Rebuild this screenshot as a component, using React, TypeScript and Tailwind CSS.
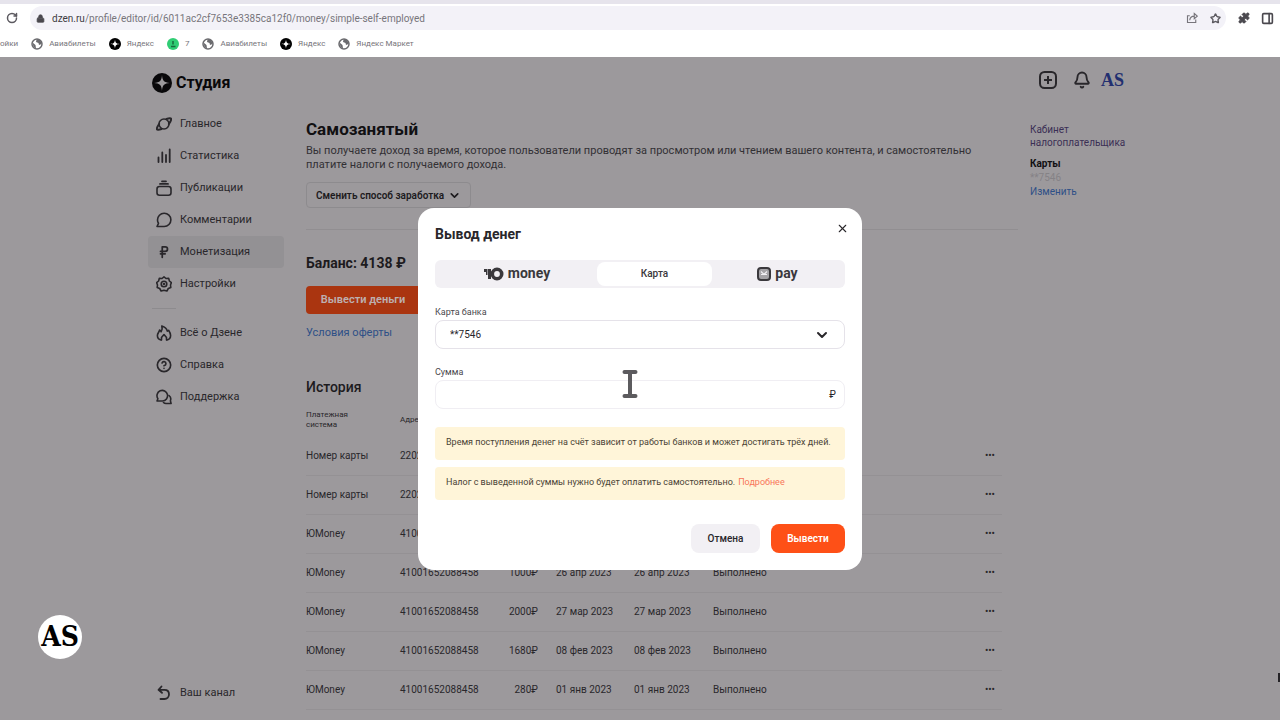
import type { ReactNode } from 'react'
import { Bell, ChevronDown, CircleHelp, Lock, PanelRight, Puzzle, RotateCw, RussianRuble, Star, X } from 'lucide-react'

const bookmarks = [
  { icon: 'globe', text: 'Авиабилеты' },
  { icon: 'zen', text: 'Яндекс' },
  { icon: 'green', text: '7' },
  { icon: 'globe', text: 'Авиабилеты' },
  { icon: 'zen', text: 'Яндекс' },
  { icon: 'globe', text: 'Яндекс Маркет' },
]

const rows = [
  { system: 'Номер карты', address: '2202', amount: '', asked: '', paid: '', status: '' },
  { system: 'Номер карты', address: '2202', amount: '', asked: '', paid: '', status: '' },
  { system: 'ЮMoney', address: '4100', amount: '', asked: '', paid: '', status: '' },
  { system: 'ЮMoney', address: '41001652088458', amount: '1000₽', asked: '26 апр 2023', paid: '26 апр 2023', status: 'Выполнено' },
  { system: 'ЮMoney', address: '41001652088458', amount: '2000₽', asked: '27 мар 2023', paid: '27 мар 2023', status: 'Выполнено' },
  { system: 'ЮMoney', address: '41001652088458', amount: '1680₽', asked: '08 фев 2023', paid: '08 фев 2023', status: 'Выполнено' },
  { system: 'ЮMoney', address: '41001652088458', amount: '280₽', asked: '01 янв 2023', paid: '01 янв 2023', status: 'Выполнено' },
]

const ZenMark = ({ className, star }: { className: string, star: string }) => (
  <svg viewBox="0 0 24 24" className={className} aria-hidden="true">
    <circle cx="12" cy="12" r="12" fill="currentColor" />
    <path d="M12 2.500c.4 6.600 2.400 9.100 9.500 9.500-7.100.4-9.100 2.900-9.500 9.500-.4-6.600-2.400-9.100-9.500-9.500 7.100-.4 9.100-2.900 9.500-9.500z" fill={star} />
  </svg>
)

const GlobeMark = () => (
  <svg viewBox="0 0 24 24" className="size-3 text-[#6a6a6e]" aria-hidden="true">
    <circle cx="12" cy="12" r="10" fill="none" stroke="currentColor" strokeWidth="3" />
    <path d="M3 9l6 5 1 7-5-3zM11 3l-1 5 5 2 1 4 5-2-2-7-5-3z" fill="currentColor" />
  </svg>
)

const GreenMark = () => (
  <svg viewBox="0 0 24 24" className="size-3" aria-hidden="true">
    <circle cx="12" cy="12" r="12" fill="#30cd74" />
    <path d="M12 6v7M8 17h9" stroke="#176b3c" strokeWidth="3" fill="none" />
  </svg>
)

const ShareIcon = () => (
  <svg viewBox="0 0 16 16" className="size-3" fill="none" stroke="currentColor" strokeWidth="1.500" aria-hidden="true">
    <path d="M5 5H2v9h11v-4" />
    <path d="M5 11c.3-3.500 2.500-5.500 6-5.500M11 2l4 3.500L11 9z" />
  </svg>
)

// 16px line icons of the side menu
const MenuIcon = ({ children }: { children: ReactNode }) => (
  <svg viewBox="0 0 16 16" className="size-4 shrink-0" fill="none" stroke="currentColor" strokeWidth="1.600" strokeLinejoin="round" strokeLinecap="round" aria-hidden="true">
    {children}
  </svg>
)

const PlanetIcon = () => <MenuIcon>
  <circle cx="8" cy="8" r="5" />
  <path d="M10.500 3c2.600-.9 4.600-.9 4.700-.1.200 1.200-.9 3-2.300 5.100M5.500 13c-2.600.9-4.600.9-4.700.1-.2-1.200.9-3 2.300-5.100" strokeWidth="2" />
</MenuIcon>

const StatsIcon = () => <MenuIcon>
  <path d="M2.500 14V9.500M6.300 14V4.500M10 14V7M13.700 14V1.500" strokeWidth="1.800" />
</MenuIcon>

const PublicationsIcon = () => <MenuIcon>
  <rect x="1" y="6.500" width="14" height="8.700" rx="2.500" />
  <path d="M4 3.900h8M6 1.300h4" strokeWidth="1.800" />
</MenuIcon>

const CommentIcon = () => <MenuIcon>
  <path d="M1 14.500l1.500-3.200C1.800 10.300 1.500 9.200 1.500 8A6.700 6.600 0 1 1 8.200 14.500z" />
</MenuIcon>

const SettingsIcon = () => <MenuIcon>
  <path d="M8 .900l2 1.600 2.700-.1.700 2.600 2 1.600-.9 2.400.3 2.500-2.500 1L10.900 15 8 14.300 5.100 15l-1.400-2.500-2.500-1 .3-2.500-.9-2.400 2-1.600.7-2.600 2.700.1z" />
  <circle cx="8" cy="8" r="2.800" />
  <circle cx="8" cy="8" r=".5" />
</MenuIcon>

const FlameIcon = () => <MenuIcon>
  <path d="M5 15c-2.200-.6-3.600-2.300-3.600-4.500C1.400 8 3.200 7.300 3.600 5c.9.400 1.300 1 1.500 1.700C6.200 5 6.500 3 5.800.900c3 .8 5 2.800 5.500 5.300l1.300-.9c1 1.500 2 3.200 2 5.200 0 2.200-1.400 3.900-3.600 4.500" />
  <path d="M5.500 15v-2.500L8 9.500l2.500 3V15" />
</MenuIcon>

const SupportIcon = () => <MenuIcon>
  <path d="M1 12l.9-2.300A5.300 5.300 0 1 1 6.500 12z" />
  <path d="M13 6.500c1.700 1.400 2.200 3.300 1.400 5.300l.7 2.700H10c-1 0-1.800-.3-2.500-1" />
</MenuIcon>

const BackIcon = () => <MenuIcon>
  <path d="M5.500 1.500L2.500 4.800l3.500 3M3 4.800h5.500c2.700 0 4.500 1.900 4.500 4.500s-1.800 4.700-4.500 4.700H4.500" strokeWidth="1.800" />
</MenuIcon>

const NavItem = ({ icon, text, active }: { icon: ReactNode, text: string, active?: boolean }) => (
  <li>
    <a href="#" className={`flex h-8 items-center gap-2 rounded pl-2 ${active ? 'bg-[#939194]' : ''}`}>
      {icon}
      {text}
    </a>
  </li>
)

function BrowserBar() {
  return <header className="shrink-0 overflow-hidden border-t-4 border-[#e6e4ec] bg-white text-[#77757b]">
    <div className="mt-[2px] flex h-6 items-center pr-[6px]">
      <button aria-label="Обновить" className="mx-[6px] text-[#5c5a60]"><RotateCw size={12} strokeWidth={3} /></button>
      <div className="ml-[6px] flex h-6 flex-1 items-center rounded-full bg-[#f3f2f8] pr-[5px] pl-[6px] text-[10px]">
        <Lock size={9} fill="currentColor" className="text-[#4a484e]" />
        <label htmlFor="url" className="pl-[7px] text-[#3e3c42]">dzen.ru</label>
        <input id="url" className="min-w-0 flex-1 bg-transparent" defaultValue="/profile/editor/id/6011ac2cf7653e3385ca12f0/money/simple-self-employed" />
        <button aria-label="Поделиться" className="mr-3"><ShareIcon /></button>
        <button aria-label="В закладки" className="text-[#5c5a60]"><Star size={11} strokeWidth={3} /></button>
      </div>
      <button aria-label="Расширения" className="ml-3 text-[#4a484e]"><Puzzle size={12} fill="currentColor" /></button>
      <button aria-label="Боковая панель" className="ml-[11px] text-[#4a484e]"><PanelRight size={13} strokeWidth={3} /></button>
    </div>
    <nav className="flex h-[27px] items-center gap-[13px] text-[8px]">
      <a href="#">ойки</a>
      {bookmarks.map((mark, i) => (
        <a href="#" key={i} className="flex items-center gap-[6px]">
          {mark.icon === 'globe' && <GlobeMark />}
          {mark.icon === 'zen' && <ZenMark className="size-3 text-black" star="#fff" />}
          {mark.icon === 'green' && <GreenMark />}
          {mark.text}
        </a>
      ))}
    </nav>
  </header>
}

function Sidebar() {
  return <aside className="flex w-[136px] shrink-0 flex-col text-[11px] text-[#29272b]">
    <a href="#" className="mt-3 ml-1 flex h-7 items-center gap-1 text-[16px] font-bold text-[#09080a]">
      <ZenMark className="size-5" star="#9c999c" />
      Студия
    </a>
    <ul className="mt-[11px]">
      <NavItem icon={<PlanetIcon />} text="Главное" />
      <NavItem icon={<StatsIcon />} text="Статистика" />
      <NavItem icon={<PublicationsIcon />} text="Публикации" />
      <NavItem icon={<CommentIcon />} text="Комментарии" />
      <NavItem icon={<RussianRuble size={16} className="p-[1px]" strokeWidth={3} />} text="Монетизация" active />
      <NavItem icon={<SettingsIcon />} text="Настройки" />
    </ul>
    <hr className="my-2 ml-1 w-6 border-[#8d8b8e]" />
    <ul>
      <NavItem icon={<FlameIcon />} text="Всё о Дзене" />
      <NavItem icon={<CircleHelp size={16} strokeWidth={2.500} />} text="Справка" />
      <NavItem icon={<SupportIcon />} text="Поддержка" />
    </ul>
    <ul className="mt-auto mb-[11px]">
      <NavItem icon={<BackIcon />} text="Ваш канал" />
    </ul>
  </aside>
}

function History() {
  return <section>
    <h2 className="mt-9 text-[14px] leading-5 font-medium text-[#1d1b1e]">История</h2>
    <table className="mt-[7px] w-[696px] table-fixed text-left text-[10px] text-[#29272b]">
      <thead>
        <tr className="h-8 text-[8px] leading-[10px]">
          <th className="w-[94px] font-normal">Платежная<br />система</th>
          <th className="w-[90px] font-normal">Адрес</th>
          <th className="w-12"></th>
          <th className="w-24"></th>
          <th className="w-[79px]"></th>
          <th></th>
          <th className="w-8"></th>
        </tr>
      </thead>
      <tbody>
        {rows.map((row, i) => (
          <tr key={i} className="h-[39px] border-b border-[#949194]">
            <td>{row.system}</td>
            <td>{row.address}</td>
            <td className="text-right">{row.amount}</td>
            <td className="pl-[18px]">{row.asked}</td>
            <td>{row.paid}</td>
            <td>{row.status}</td>
            <td className="pr-[7px] text-right"><button aria-label="Ещё">•••</button></td>
          </tr>
        ))}
      </tbody>
    </table>
  </section>
}

function WithdrawDialog() {
  return <div role="dialog" aria-label="Вывод денег" className="relative w-[444px] rounded-2xl bg-white p-[17px] text-[#29272b]">
    <div className="flex h-5 items-center justify-between">
      <h2 className="text-[14px] font-bold">Вывод денег</h2>
      <button aria-label="Закрыть" className="mb-3 -mr-1"><X size={13} /></button>
    </div>
    <div className="mt-[15px] flex h-7 rounded-md bg-[#f2f0f4] p-[2px] text-[#3a383c]">
      <button className="flex w-40 items-center justify-center gap-1 text-[14px] font-bold">
        <svg viewBox="0 0 20 14" className="h-[14px] w-5" aria-hidden="true">
          <path d="M0 2h3.500v6H2V5H0zM4 2h3v10H4z" fill="currentColor" />
          <circle cx="13" cy="7" r="4.700" fill="none" stroke="currentColor" strokeWidth="3.600" />
        </svg>
        money
      </button>
      <button className="w-[115px] rounded-lg bg-white text-[10px] font-medium">Карта</button>
      <button className="flex flex-1 items-center justify-center gap-1 text-[14px] font-bold">
        <svg viewBox="0 0 14 14" className="size-[14px]" aria-hidden="true">
          <rect x="1" y="1" width="12" height="12" rx="3" fill="#a5a3a7" stroke="currentColor" strokeWidth="2" />
          <path d="M4 4.500l3 3 3-3M4 7.500h6" stroke="#f2f0f4" strokeWidth="1.200" fill="none" />
        </svg>
        pay
      </button>
    </div>
    <label htmlFor="card" className="mt-4 block h-4 text-[9px] leading-4 text-[#4a484c]">Карта банка</label>
    <div className="relative">
      <select id="card" className="h-[29px] w-full appearance-none rounded-lg border border-[#e5e2e9] bg-white px-[14px] text-[10px]">
        <option>**7546</option>
      </select>
      <ChevronDown size={16} strokeWidth={3} className="pointer-events-none absolute top-[7px] right-[15px]" />
    </div>
    <label htmlFor="sum" className="mt-[15px] block h-4 text-[9px] leading-4 text-[#4a484c]">Сумма</label>
    <div className="relative">
      <input id="sum" className="h-[29px] w-full rounded-lg border border-[#f0eef3] px-[14px] text-[10px]" />
      <span className="absolute top-[7px] right-[9px] text-[10px]">₽</span>
    </div>
    <p className="mt-[18px] flex h-[33px] items-center rounded bg-[#fff5d9] px-[11px] text-[9px] whitespace-nowrap text-[#4a4335]">
      Время поступления денег на счёт зависит от работы банков и может достигать трёх дней.
    </p>
    <p className="mt-[7px] flex h-[33px] items-center gap-[3px] rounded bg-[#fff5d9] px-[11px] text-[9px] whitespace-nowrap text-[#4a4335]">
      Налог с выведенной суммы нужно будет оплатить самостоятельно.
      <a href="#" className="text-[#f8765a]">Подробнее</a>
    </p>
    <div className="mt-6 flex h-[29px] justify-end gap-[11px] text-[10px]">
      <button className="w-[69px] rounded-lg bg-[#f2f0f4] font-medium">Отмена</button>
      <button className="w-[74px] rounded-lg bg-[#fe5017] font-semibold text-white">Вывести</button>
    </div>
    <svg viewBox="0 0 16 30" className="absolute top-[161px] left-[204px] h-[30px] w-4 text-[#5c5b5e]" fill="none" stroke="currentColor" strokeWidth="4" strokeLinecap="round" aria-hidden="true">
      <path d="M2.500 3h11M2.500 27h11M8 3v24" />
    </svg>
  </div>
}

export default function App() {
  return <div className="flex h-screen flex-col overflow-hidden bg-[#9c999c] font-[Roboto,sans-serif]">
    <BrowserBar />
    <div className="relative min-h-0 flex-1 overflow-hidden">
      <div className="mx-auto flex h-full max-w-[984px]">
        <Sidebar />
        <main className="ml-[22px] min-w-0 flex-1 pt-[62px] text-[11px]">
          <h1 className="text-[17px] leading-5 font-bold text-[#111012]">Самозанятый</h1>
          <p className="mt-[5px] w-[690px] leading-[14px] text-[#323034]">
            Вы получаете доход за время, которое пользователи проводят за просмотром или чтением вашего контента, и самостоятельно
            платите налоги с получаемого дохода.
          </p>
          <button className="mt-[10px] flex h-[26px] items-center gap-1 rounded border border-[#8d8b8e] px-[9px] text-[10px] font-semibold text-[#1d1b1e]">
            Сменить способ заработка
            <ChevronDown size={13} strokeWidth={3} />
          </button>
          <hr className="mt-[21px] border-[#918e91]" />
          <p className="mt-[23px] text-[14px] leading-5 font-bold text-[#1d1b1e]">Баланс: 4138 ₽</p>
          <button className="mt-[13px] h-7 w-32 rounded bg-[#aa3510] pr-[14px] text-[11px] font-semibold text-[#bdb0b0]">Вывести деньги</button>
          <a href="#" className="mt-[11px] block text-[11px] leading-4 text-[#2e5087]">Условия оферты</a>
          <History />
        </main>
        <aside className="ml-3 w-[102px] shrink-0 text-[10px] text-[#3b2f55]">
          <div className="mt-[13px] ml-2 flex h-5 items-center text-[#29272b]">
            <button aria-label="Создать">
              <svg viewBox="0 0 20 20" className="size-5" fill="none" stroke="currentColor" strokeWidth="2" aria-hidden="true">
                <rect x="2" y="2" width="16" height="16" rx="4.500" />
                <path d="M10 6v8M6 10h8" />
              </svg>
            </button>
            <button aria-label="Уведомления" className="ml-[15px]"><Bell size={18} strokeWidth={2.500} /></button>
            <button aria-label="Профиль" className="ml-[10px] font-['Liberation_Serif',serif] text-[18px] font-bold text-[#222f70]">AS</button>
          </div>
          <a href="#" className="mt-[33px] block leading-[13px]">Кабинет налогоплательщика</a>
          <p className="mt-2 leading-[14px] font-bold text-[#111012]">Карты</p>
          <p className="leading-[14px] text-[#858286]">**7546</p>
          <a href="#" className="block leading-[14px] text-[#2e5087]">Изменить</a>
        </aside>
      </div>
      <div className="absolute inset-0 flex items-center justify-center">
        <WithdrawDialog />
      </div>
      <div className="absolute bottom-[61px] left-[38px] flex size-11 items-center justify-center rounded-full bg-white font-['DejaVu_Serif_Condensed','DejaVu_Serif',serif] text-[28px] font-bold text-black">AS</div>
      <div className="absolute right-0 bottom-[38px] h-[9px] w-[2px] bg-[#242226]" />
    </div>
  </div>
}
